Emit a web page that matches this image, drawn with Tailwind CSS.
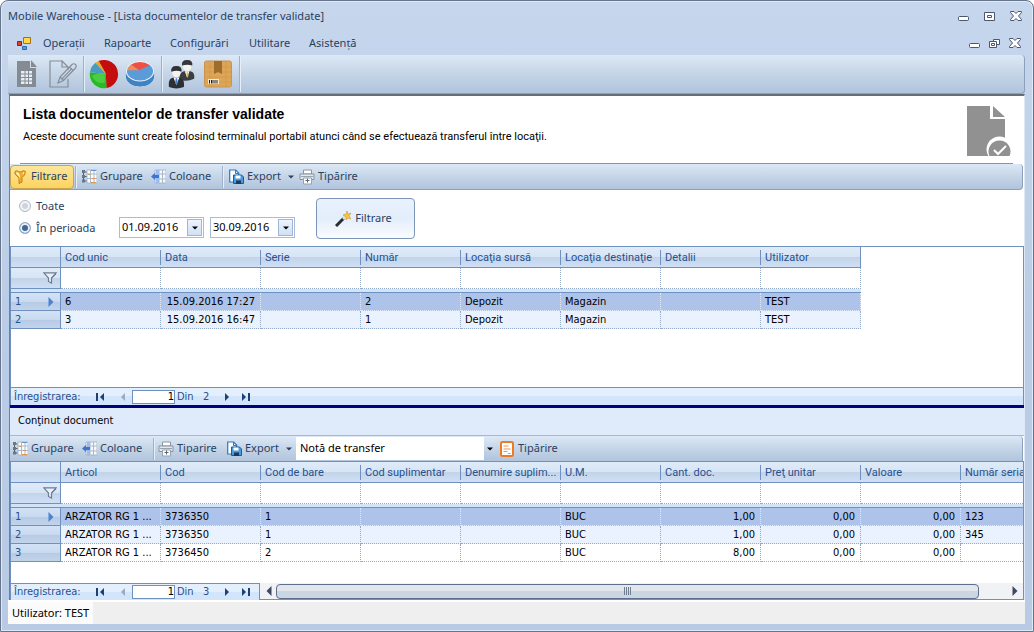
<!DOCTYPE html>
<html lang="ro">
<head>
<meta charset="utf-8">
<title>Mobile Warehouse</title>
<script src="https://cdn.jsdelivr.net/npm/@tailwindcss/browser@4"></script>
</head>
<body class="bg-white">
<svg class="hidden" aria-hidden="true">
  <symbol id="group" viewBox="0 0 15 15"><path d="M5 1h10v13H5z" fill="#fbfcfe" stroke="#9fb0c4" stroke-width=".8"/><path d="M5 5h10M5 9.500h10M8.500 1v13M12 1v13" stroke="#a9b9cc"/><path d="M1.500 2v11M1.500 3h3M1.500 7.500h3M1.500 12h3" stroke="#55606e" fill="none"/><path d="M0 1h3v3H0zM0 6h3v3H0zM0 10.500h3v3H0z" fill="#66788c"/><path d="M9 1h5v1H9z" fill="#6b93c4"/><path d="M6 5h2v1H6zM10 9h3v1h-3zM9 13h5v1H9z" fill="#e0974c"/></symbol>
  <symbol id="cols" viewBox="0 0 15 15"><path d="M4 1h11v13H4z" fill="#f4f8fd" stroke="#9fb0c4" stroke-width=".8"/><path d="M4 5h11M4 10h11M8 1v13M11.500 1v13" stroke="#a9b9cc"/><path d="M5 1h3v13H5z" fill="#9dbbec"/><path d="M0 7.500 4 4v2h4v3H4v2z" fill="#3d76cf"/></symbol>
  <symbol id="export" viewBox="0 0 15 15"><path d="M.7 1h6l3 3v9h-9z" fill="#fff" stroke="#2878c0" stroke-width="1.200"/><path d="M6.500 1v3.500h3" fill="none" stroke="#2878c0"/><path d="M4.500 6h8l2 2v6.500h-10z" fill="#4b9be0" stroke="#1b5a99"/><path d="M6.500 6.500h5v3h-5z" fill="#fff"/><path d="M7 11.500h5V15H7z" fill="#173a5e"/></symbol>
  <symbol id="print" viewBox="0 0 16 16"><path d="M4.500 1h8v4h-8z" fill="#fff" stroke="#8c96a2"/><path d="M1 5h14v5.500H1z" fill="#e3e8ee" stroke="#8791a0"/><path d="M2 7.500h12" stroke="#9aa4b1"/><path d="M4.500 9h8v6h-8z" fill="#fff" stroke="#98a1ad"/><path d="M8.500 9.500v4M6.500 11.500h4" stroke="#5b6675"/></symbol>
  <symbol id="down" viewBox="0 0 6 4"><path d="M0 .5h6L3 3.500z" fill="currentColor"/></symbol>
  <symbol id="funnel" viewBox="0 0 14 12"><path d="M.8.8h12.400L8.500 6v5l-3-1.500V6z" fill="#e9f0fa" stroke="#6a7c96" stroke-width="1.200"/><path d="M8.500 6 13 1.200v1L8.500 7z" fill="#6a7c96"/></symbol>
  <symbol id="nav" viewBox="0 0 8 8"><path d="M6 0v8L2 4z" fill="currentColor"/></symbol>
  <symbol id="navend" viewBox="0 0 9 8"><path d="M0 0h2v8H0zM8 0v8L4 4z" fill="currentColor"/></symbol>
  <symbol id="min" viewBox="0 0 11 5"><rect x=".5" y=".5" width="10" height="4" rx="1" fill="#fff" stroke="#4b5670"/></symbol>
  <symbol id="close" viewBox="0 0 12 10"><path d="M.5.5H4l2 2 2-2h3.500v1L8.500 5l3 3.500v1H8l-2-2-2 2H.5v-1L3.500 5l-3-3.500z" fill="#fff" stroke="#4b5670"/></symbol>
</svg>

<div class="flex min-h-screen flex-col overflow-hidden rounded-t-lg border border-[#66758c] bg-gradient-to-b from-[#c5d6ed] via-[#bbcde6] to-[#b9cbe4] font-['Noto_Sans','Open_Sans',sans-serif] text-[11px] text-[#2b4162] shadow-[inset_0_0_0_1px_#dfe9f6]">
  <header class="flex h-[30px] shrink-0 items-center justify-between pl-[7px] pr-[11px]">
    <h1 class="leading-4 whitespace-nowrap">Mobile Warehouse - [Lista documentelor de transfer validate]</h1>
    <div class="flex items-center gap-[15px]">
      <button aria-label="Minimizare" class="pt-1"><svg class="h-[5px] w-[11px]"><use href="#min"/></svg></button>
      <button aria-label="Maximizare"><svg class="h-[9px] w-[11px]" viewBox="0 0 11 9"><path d="M.5.5h10v8H.5z" fill="#fff" stroke="#4b5670"/><path d="M3.500 3.500h4v2h-4z" fill="#fff" stroke="#4b5670"/></svg></button>
      <button aria-label="Închidere"><svg class="h-[10px] w-[12px]"><use href="#close"/></svg></button>
    </div>
  </header>
  <div class="flex h-6 shrink-0 items-center justify-between pl-4 pr-3">
    <nav class="flex items-center">
      <svg class="mr-3 h-[13px] w-[14px]" viewBox="0 0 14 13"><path d="M6.500.5h7v6h-7z" fill="#ffd84a" stroke="#a8700f"/><path d="M.5 4.500h4v4h-4z" fill="#d8432a" stroke="#8c2113"/><path d="M5.500 9.500h4v3h-4z" fill="#5b9be0" stroke="#2c6ab0"/></svg>
      <a href="#" class="w-[61px]">Operații</a><a href="#" class="w-[66px]">Rapoarte</a><a href="#" class="w-[79px]">Configurări</a><a href="#" class="w-[60px]">Utilitare</a><a href="#">Asistență</a>
    </nav>
    <div class="flex items-center gap-[9px]">
      <button aria-label="Minimizare document" class="pt-1"><svg class="h-[5px] w-[11px]"><use href="#min"/></svg></button>
      <button aria-label="Restaurare document"><svg class="h-[9px] w-[11px]" viewBox="0 0 11 9"><path d="M4.500.5h6v5h-6z" fill="#fff" stroke="#4b5670"/><path d="M.5 2.500h7v6h-7z" fill="#fff" stroke="#4b5670"/><path d="M2.500 4.500h3v2h-3z" fill="#fff" stroke="#4b5670"/></svg></button>
      <button aria-label="Închidere document"><svg class="h-[10px] w-[12px]"><use href="#close"/></svg></button>
    </div>
  </div>
  <div class="mr-2 ml-[7px] flex h-[39px] shrink-0 items-center rounded-r border-r border-b border-[#8ba0bb] bg-gradient-to-b from-[#dce8f6] via-[#c5d5e7] to-[#b0c4dd]">
    <button aria-label="Documente" class="pl-[9px]"><svg class="h-7 w-5" viewBox="0 0 20 28"><path d="M0 1h13v7h6v19H0z" fill="#858b93"/><path d="M14 0l6 7h-6z" fill="#858b93"/><path d="M4 11h11v13H4z" fill="#e6edf5"/><path d="M4 14h11M4 17.500h11M4 21h11M8 11v13M11.500 11v13" stroke="#858b93"/></svg></button>
    <button aria-label="Editare" class="pl-3"><svg class="h-7 w-7" viewBox="0 0 28 28"><path d="M13 1H1v26h18v-8M13 1l6 6h-6zM19 7v3" fill="none" stroke="#868d96" stroke-width="1.200"/><path d="M9 23l2-6L23 4.500q2-1.500 3.500 0t0 3.500L14.500 20.500zM20.500 7l3.500 3.500M11 17l3.500 3.500M13 18.800 22.500 8.800" fill="none" stroke="#868d96" stroke-width="1.200"/></svg></button>
    <span class="ml-[6px] h-9 w-[2px] border-l border-[#9fb1c8] bg-[#e6eef8]"></span>
    <button aria-label="Grafic" class="pl-1"><svg class="h-[30px] w-[30px]" viewBox="0 0 32 32"><path d="M18 16 10 2.200A15 15 0 0 1 31 16 15 15 0 0 1 18.500 31z" fill="#c40d0d"/><path d="M18 16 18.500 31A15 15 0 0 1 1 14z" fill="#27ba22"/><path d="M18 16 1 14A15 15 0 0 1 7 4z" fill="#4a9cbd"/><path d="M18 16 7 4l3.500-2z" fill="#f3a01a"/><path d="M3 18q5-4 14-2v9q-9 3-14-7z" fill="#6fe05f" opacity=".5"/></svg></button>
    <button aria-label="Grafic 3D" class="pl-[6px]"><svg class="h-[30px] w-[30px]" viewBox="0 0 32 32"><ellipse cx="16" cy="18" rx="15" ry="11" fill="#2d6fae"/><path d="M1 12v6q2 11 15 11t15-11v-6z" fill="#3e84c4"/><ellipse cx="16" cy="13" rx="15" ry="10.500" fill="#5b9bd8"/><path d="M15 12 6 5.500Q10 2.500 16 2.500T27.500 6z" fill="#f14f42"/><path d="M15 12 1.500 12q0-4 4.500-6.500z" fill="#f58a55"/><ellipse cx="16" cy="13" rx="14.500" ry="10.500" fill="none" stroke="#e4f1fc" stroke-width="1.200"/></svg></button>
    <span class="ml-[6px] h-9 w-[2px] border-l border-[#9fb1c8] bg-[#e6eef8]"></span>
    <button aria-label="Utilizatori" class="pl-[5px]"><svg class="h-[30px] w-7" viewBox="0 0 30 32"><path d="M12 22q0-8 5-9h7q5 1 4 8-8 4-16 1z" fill="#3a3d42"/><path d="M18 13h5l-2.500 7z" fill="#fff"/><path d="M20 14h1.500l.5 4-1.200 2-1-2z" fill="#e0b52c"/><ellipse cx="20.500" cy="8" rx="4.500" ry="5" fill="#f6f3ef"/><path d="M15 7q-1-6 5.500-6T26 7q-5-2-11 0z" fill="#35373b"/><path d="M1 30q-1-9 4-10h8q5 1 4 10-8 3-16 0z" fill="#2c2f34"/><path d="M6 20h6l-3 8z" fill="#fff"/><path d="M8.300 20.500h1.500l.7 5-1.500 2-1.400-2z" fill="#3f7ed0"/><ellipse cx="9" cy="14.500" rx="4.500" ry="5" fill="#f6f3ef"/><path d="M3.500 13.500q-1-6 5.500-6t5.500 6q-5-2-11 0z" fill="#303236"/></svg></button>
    <button aria-label="Articole" class="pl-2"><svg class="h-7 w-7" viewBox="0 0 28 28"><rect x=".5" y="1" width="27" height="26" rx="2" fill="#dda557" stroke="#c99352"/><path d="M1 7h26M1 12h26M1 17h26M1 22h26M6 1v26M22 1v26" stroke="#d0994a" stroke-width=".7"/><path d="M10 1h8v13l-4-2-4 2z" fill="#9c6d2b"/><path d="M4 19h11v5H4z" fill="#f3ead8"/><path d="M5.500 20v3.500M7.500 20v3.500M9 20v3.500M11 20v3.500M13 20v3.500" stroke="#222"/></svg></button>
    <span class="ml-[7px] h-9 w-[2px] border-l border-[#9fb1c8] bg-[#e6eef8]"></span>
  </div>

  <main class="mr-2 ml-2 flex grow flex-col border-t-2 border-r border-l border-t-[#666d76] border-r-[#dfe9f6] border-l-[#747f90] bg-white">
    <section class="flex h-[69px] shrink-0 items-start justify-between pr-3 pl-[13px]">
      <div class="pt-2">
        <h2 class="font-['Liberation_Sans',sans-serif] text-[14px] leading-5 font-bold text-black">Lista documentelor de transfer validate</h2>
        <p class="mt-[5px] font-['Roboto',sans-serif] leading-4 text-black">Aceste documente sunt create folosind terminalul portabil atunci când se efectuează transferul între locaţii.</p>
      </div>
      <svg class="mt-[9px] h-[52px] w-[46px]" viewBox="0 0 46 52"><path d="M1 1h23v13h15v37H1z" fill="#919191"/><path d="M27 1 39 12H27z" fill="#919191"/><circle cx="33.500" cy="44.500" r="13" fill="#fff"/><path d="M23.500 51a11 11 0 1 1 20 0z" fill="#919191"/><path d="m28 45 4 4 8-8" fill="none" stroke="#fff" stroke-width="2"/></svg>
    </section>
    <div class="mr-[11px] ml-[10px] -mt-[2px] border-t border-[#8d939b]"></div>
    <div class="mr-px flex h-[26px] shrink-0 items-center rounded-r border-r border-b border-[#8ba0bb] bg-gradient-to-b from-[#dce8f6] via-[#c5d5e7] to-[#b0c4dd]">
      <button class="flex h-6 w-16 items-center gap-[5px] rounded-sm border border-[#c9a34e] bg-gradient-to-b from-[#fde69a] to-[#fcd35f] pl-[3px]"><svg class="h-[14px] w-[12px]" viewBox="0 0 12 14"><path d="M1 1.500q1.500-1.500 3.500 0 1.500 1 3 0 2-1.500 4 0L10.500 5 8 7.500V12l-3 1.500V8L1 4z" fill="#f2ad2c" stroke="#bf8124"/><path d="M2 2.500q1.500-1 3 1L6 6.500v4L5.500 7 2.500 4zM8.500 3q1-1 2-.5l-1 2z" fill="#fff6cf"/></svg>Filtrare</button>
      <span class="mr-[5px] ml-px h-[22px] w-[2px] border-l border-[#9fb1c8] bg-[#e6eef8]"></span>
      <button class="flex w-[69px] items-center gap-[3px]"><svg class="size-[15px] shrink-0"><use href="#group"/></svg>Grupare</button>
      <button class="flex w-[71px] items-center gap-[3px]"><svg class="size-[15px] shrink-0"><use href="#cols"/></svg>Coloane</button>
      <span class="mr-[5px] h-[22px] w-[2px] border-l border-[#9fb1c8] bg-[#e6eef8]"></span>
      <button class="flex w-[59px] items-center gap-[3px]"><svg class="size-[15px] shrink-0"><use href="#export"/></svg>Export</button>
      <button aria-label="Opțiuni export" class="w-[11px]"><svg class="h-1 w-[6px]"><use href="#down"/></svg></button>
      <button class="flex items-center gap-[3px]"><svg class="size-4 shrink-0"><use href="#print"/></svg>Tipărire</button>
    </div>
    <form class="flex h-[56px] shrink-0 items-start pt-[7px] pl-[9px]">
      <div class="w-[100px]">
        <label class="flex h-[18px] items-center gap-[5px]"><input type="radio" name="interval" class="size-[12px] appearance-none rounded-full border border-[#b4bdc9] bg-[#cdd4dc] shadow-[inset_0_0_0_2px_#f4f6f8] checked:border-[#9fb1c8] checked:bg-[#3f6797] checked:shadow-[inset_0_0_0_2px_#e8eef6]">Toate</label>
        <label class="mt-1 flex h-[18px] items-center gap-[5px] whitespace-nowrap"><input type="radio" name="interval" checked class="size-[12px] appearance-none rounded-full border border-[#b4bdc9] bg-[#cdd4dc] checked:border-[#9fb1c8] checked:bg-[#3f6797] checked:shadow-[inset_0_0_0_2px_#e8eef6]">În perioada</label>
      </div>
      <div class="mt-5 flex h-[21px] w-[85px] items-center border border-[#a9bddb] bg-white p-px">
        <input aria-label="De la" value="01.09.2016" class="w-0 grow pl-px text-black outline-none">
        <button type="button" aria-label="Alege data de început" class="flex h-full w-[15px] items-center justify-center border border-[#a0b6d8] bg-gradient-to-b from-[#edf4fd] to-[#d0e0f5] text-black"><svg class="h-1 w-[6px]"><use href="#down"/></svg></button>
      </div>
      <div class="mt-5 ml-[6px] flex h-[21px] w-[85px] items-center border border-[#a9bddb] bg-white p-px">
        <input aria-label="Până la" value="30.09.2016" class="w-0 grow pl-px text-black outline-none">
        <button type="button" aria-label="Alege data de sfârșit" class="flex h-full w-[15px] items-center justify-center border border-[#a0b6d8] bg-gradient-to-b from-[#edf4fd] to-[#d0e0f5] text-black"><svg class="h-1 w-[6px]"><use href="#down"/></svg></button>
      </div>
      <button type="button" class="mt-px ml-[21px] flex h-[41px] w-[99px] items-center justify-center gap-1 rounded-sm border border-[#7d95b8] bg-gradient-to-b from-[#e9f2fd] via-[#e3eefb] to-[#fafcff] pr-1"><svg class="size-4" viewBox="0 0 16 16"><path d="M1 15 9 7" stroke="#2b2b33" stroke-width="3"/><path d="m8 8 2-2" stroke="#d8dde6" stroke-width="3"/><path d="M12 0l1 3 3-1-2 3 2 3-3-1-2 2V6L8 4l3-1z" fill="#f5c63a" stroke="#c98a1e" stroke-width=".5"/></svg>Filtrare</button>
    </form>

    <section class="flex grow flex-col border border-b-0 border-[#6f91c0] font-['DejaVu_Sans_Condensed','DejaVu_Sans',sans-serif] leading-4 text-black">
      <div class="grow overflow-hidden">
        <table id="docs" class="w-[850px] table-fixed border-separate border-spacing-0"></table>
      </div>
      <div class="flex h-[18px] shrink-0 items-center border-t border-[#6f91c0] bg-[linear-gradient(#e3effd_50%,#d3e5fa_50%)] pl-[3px] text-[#27508f]">
        <label for="rec1" class="w-[82px]">Înregistrarea:</label>
        <button aria-label="Prima" class="w-[23px] text-[#1f3f77]"><svg class="h-2 w-[9px]"><use href="#navend"/></svg></button>
        <button aria-label="Precedenta" class="w-[13px] text-[#9aaac2]"><svg class="h-2 w-2"><use href="#nav"/></svg></button>
        <input id="rec1" value="1" class="h-[14px] w-[43px] border border-[#6f91c0] bg-white text-right text-black outline-none">
        <span class="w-7 pl-[2px]">Din</span><span class="w-5">2</span>
        <button aria-label="Următoarea" class="w-[18px] rotate-180 text-[#1f3f77]"><svg class="ml-auto h-2 w-2"><use href="#nav"/></svg></button>
        <button aria-label="Ultima" class="rotate-180 text-[#1f3f77]"><svg class="h-2 w-[9px]"><use href="#navend"/></svg></button>
      </div>
    </section>
    <div class="h-[3px] shrink-0 bg-[#00007b]"></div>

    <section class="flex h-[28px] shrink-0 items-center border-b border-[#a5b9d3] bg-[#dfebfa] pl-2 font-['DejaVu_Sans_Condensed','DejaVu_Sans',sans-serif] text-black">Conţinut document</section>
    <div class="mr-px flex h-[25px] shrink-0 items-center rounded-tr border-r border-[#8ba0bb] bg-gradient-to-b from-[#dce8f6] via-[#c5d5e7] to-[#b0c4dd] pl-[3px]">
      <button class="flex w-[69px] items-center gap-[3px]"><svg class="size-[15px] shrink-0"><use href="#group"/></svg>Grupare</button>
      <button class="flex w-[71px] items-center gap-[3px]"><svg class="size-[15px] shrink-0"><use href="#cols"/></svg>Coloane</button>
      <span class="mr-[3px] h-[22px] w-[2px] border-l border-[#9fb1c8] bg-[#e6eef8]"></span>
      <button class="flex w-[69px] items-center gap-[3px]"><svg class="size-4 shrink-0"><use href="#print"/></svg>Tiparire</button>
      <button class="flex w-[59px] items-center gap-[3px]"><svg class="size-[15px] shrink-0"><use href="#export"/></svg>Export</button>
      <button aria-label="Opțiuni export" class="w-[10px]"><svg class="h-1 w-[6px]"><use href="#down"/></svg></button>
      <div class="relative h-[23px] w-[200px]">
        <select aria-label="Tip document" class="h-full w-full appearance-none bg-white pl-1 text-black outline-none"><option>Notă de transfer</option></select>
        <span class="pointer-events-none absolute inset-y-0 right-0 flex w-3 items-center justify-center bg-gradient-to-b from-[#dce8f6] to-[#b0c4dd] text-black"><svg class="h-1 w-[6px]"><use href="#down"/></svg></span>
      </div>
      <button class="ml-1 flex items-center gap-1"><svg class="h-4 w-[14px]" viewBox="0 0 14 16"><rect x="1" y="1" width="12" height="14" rx="1.500" fill="#fff" stroke="#ee7a22" stroke-width="2"/><path d="M3.500 5h5M3.500 8h7M3.500 10.500h4M8 12.500h2.500" stroke="#f0954f" stroke-width="1.200"/></svg>Tipărire</button>
    </div>
    <section class="flex shrink-0 flex-col border border-[#6f91c0] font-['DejaVu_Sans_Condensed','DejaVu_Sans',sans-serif] leading-4 text-black">
      <div class="h-[121px] overflow-hidden">
        <table id="lines" class="w-[1050px] table-fixed border-separate border-spacing-0"></table>
      </div>
      <div class="flex h-[16px] shrink-0 items-center">
        <div class="flex h-[17px] w-[249px] items-center border-t border-r border-[#6f91c0] bg-[linear-gradient(#e3effd_50%,#d3e5fa_50%)] pl-[3px] text-[#27508f]">
          <label for="rec2" class="w-[82px]">Înregistrarea:</label>
          <button aria-label="Prima linie" class="w-[23px] text-[#1f3f77]"><svg class="h-2 w-[9px]"><use href="#navend"/></svg></button>
          <button aria-label="Linia precedentă" class="w-[13px] text-[#9aaac2]"><svg class="h-2 w-2"><use href="#nav"/></svg></button>
          <input id="rec2" value="1" class="h-[14px] w-[43px] border border-[#6f91c0] bg-white text-right text-black outline-none">
          <span class="w-7 pl-[2px]">Din</span><span class="w-5">3</span>
          <button aria-label="Linia următoare" class="w-[18px] rotate-180 text-[#1f3f77]"><svg class="ml-auto h-2 w-2"><use href="#nav"/></svg></button>
          <button aria-label="Ultima linie" class="rotate-180 text-[#1f3f77]"><svg class="h-2 w-[9px]"><use href="#navend"/></svg></button>
        </div>
        <div class="flex h-[16px] grow items-center bg-[#f1f2f5] text-[#3c4a63]">
          <button aria-label="Derulare stânga" class="w-[16px] pl-1"><svg class="h-[10px] w-[10px]"><use href="#nav"/></svg></button>
          <div class="flex h-[15px] grow items-center justify-center gap-px rounded-sm border border-[#5d6f8c] bg-[linear-gradient(#e3e7ec_50%,#cbd6e3_50%)]">
            <i class="h-2 w-px bg-[#6f7d91]"></i><i class="h-2 w-px bg-[#6f7d91]"></i><i class="h-2 w-px bg-[#6f7d91]"></i><i class="h-2 w-px bg-[#6f7d91]"></i>
          </div>
          <button aria-label="Derulare dreapta" class="flex w-11 rotate-180 pl-[3px]"><svg class="h-[10px] w-[10px]"><use href="#nav"/></svg></button>
        </div>
      </div>
    </section>
  </main>
  <footer class="mr-2 mb-[7px] ml-[7px] flex h-6 shrink-0 items-stretch border-t-2 border-white bg-[#efefef] text-black">
    <span class="flex items-center bg-[#fbfbfb] px-1">Utilizator: TEST</span>
  </footer>
</div>

<script>
const face = 'bg-[linear-gradient(#e0ebf8_0%,#d6e4f5_50%,#c3d3e8_52%,#cfdff5_100%)]';
const numFace = 'bg-[linear-gradient(#d3e2f5_0%,#c9daf0_50%,#b7cae5_52%,#c2d4ec_100%)]';
function fill(id, cols, rows) {
  const right = cols.map(c => c[1]);
  const n = cols.length;
  const head = `<colgroup><col class="w-[50px]">${'<col class="w-[100px]">'.repeat(n)}</colgroup><thead><tr class="h-[21px]"><th class="border-r border-b border-[#6f91c0] ${face}"></th>` +
    cols.map(([t], i) => `<th class="border-b border-[#6f91c0] p-0 text-left font-['Roboto',sans-serif] font-normal text-[#27508f] ${i === n - 1 ? 'border-r' : ''} ${face}"><div class="h-[15px] truncate border-r ${i === n - 1 ? 'border-transparent' : 'border-[#6f91c0]'} pl-1 leading-[15px]">${t}</div></th>`).join('') + '</tr>' +
    `<tr class="h-[21px]"><td class="border-r border-b border-[#6f91c0] p-0 ${face}"><svg class="ml-8 h-3 w-[14px]"><use href="#funnel"/></svg></td>` +
    `<td class="border-r border-b border-dotted border-[#93abc9]"></td>`.repeat(n) + `</tr>` +
    `<tr class="h-1"><td colspan="${n + 1}" class="h-1 border-b border-[#6f91c0] bg-[#d3e4f8] p-0"></td></tr></thead>`;
  const body = rows.map((r, k) => `<tr class="h-[18px] ${k === 0 ? 'bg-[#adc3e9]' : k === 1 ? 'bg-[#e9f2fe]' : 'bg-white'}"><th class="border-r border-b border-[#6f91c0] p-0 font-normal text-[#27508f] ${numFace}"><div class="flex items-center justify-between pt-px pr-1 pl-1">${k + 1}${k === 0 ? '<svg class="size-[10px] rotate-180 text-[#4b83cc]"><use href="#nav"/></svg>' : ''}</div></th>` +
    r.map((v, i) => `<td class="truncate border-r border-b border-dotted p-0 pt-px ${k === 0 ? 'border-[#dfe9f8]' : 'border-[#93abc9]'} ${right[i] ? 'pr-[5px] text-right' : 'pl-1'}">${v}</td>`).join('') + '</tr>').join('');
  document.getElementById(id).innerHTML = head + '<tbody>' + body + '</tbody>';
}
fill('docs', [['Cod unic'], ['Data', 1], ['Serie'], ['Număr'], ['Locaţia sursă'], ['Locaţia destinaţie'], ['Detalii'], ['Utilizator']],
  [['6', '15.09.2016 17:27', '', '2', 'Depozit', 'Magazin', '', 'TEST'], ['3', '15.09.2016 16:47', '', '1', 'Depozit', 'Magazin', '', 'TEST']]);
fill('lines', [['Articol'], ['Cod'], ['Cod de bare'], ['Cod suplimentar'], ['Denumire suplim...'], ['U.M.'], ['Cant. doc.', 1], ['Preţ unitar', 1], ['Valoare', 1], ['Număr seria']],
  [['ARZATOR RG 1 ...', '3736350', '1', '', '', 'BUC', '1,00', '0,00', '0,00', '123'], ['ARZATOR RG 1 ...', '3736350', '1', '', '', 'BUC', '1,00', '0,00', '0,00', '345'], ['ARZATOR RG 1 ...', '3736450', '2', '', '', 'BUC', '8,00', '0,00', '0,00', '']]);
</script>
</body>
</html>
